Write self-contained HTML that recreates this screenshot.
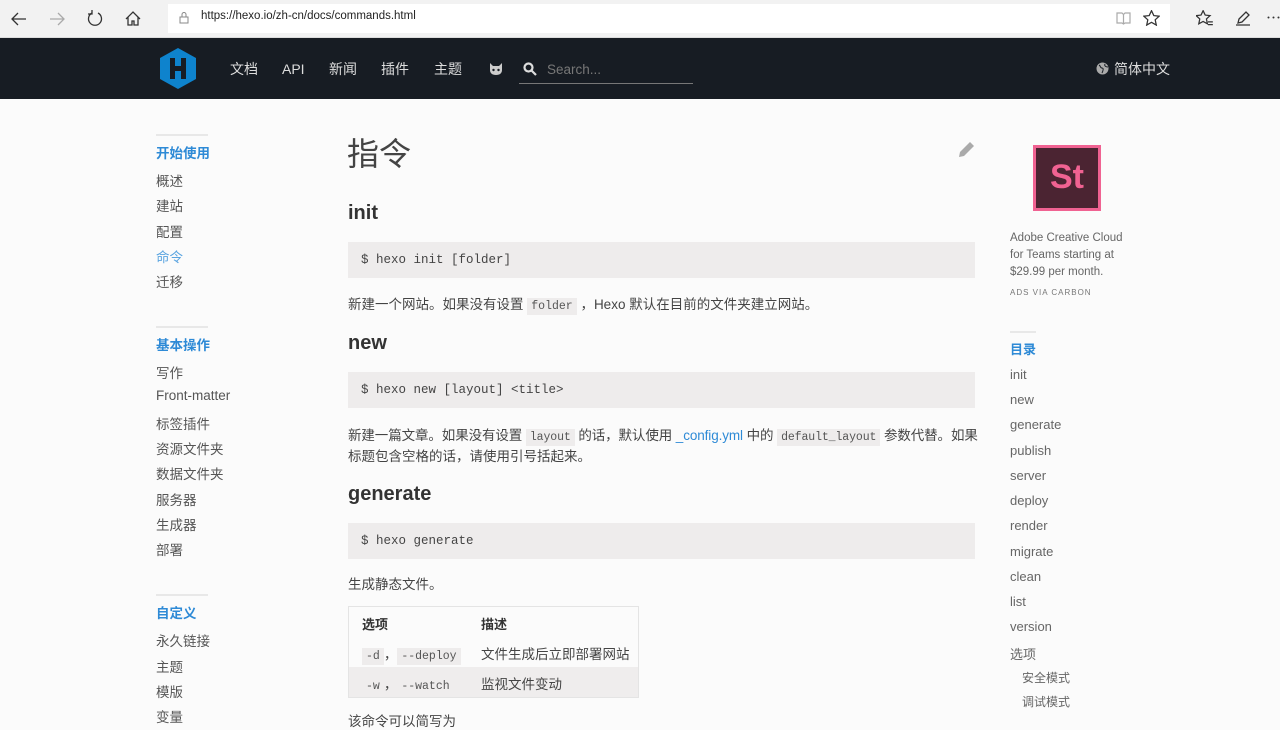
<!DOCTYPE html>
<html><head><meta charset="utf-8"><style>
*{margin:0;padding:0;box-sizing:border-box}
body{width:1280px;height:718px;overflow:hidden;background:#fbfbfb;font-family:"Liberation Sans","Noto Sans CJK SC",sans-serif;color:#555;position:relative}
.a{position:absolute;white-space:nowrap}
.chrome{position:absolute;left:0;top:0;width:1280px;height:38px;background:#f2f2f2;border-bottom:1px solid #ddd}
.addr{position:absolute;left:168px;top:4px;width:1002px;height:29px;background:#fff}
.nav{position:absolute;left:0;top:38px;width:1280px;height:61px;background:#171c23}
.nv{position:absolute;top:21px;height:20px;display:flex;align-items:center;color:#ddd;font-size:14px}
.sh{font-size:13.5px;font-weight:bold;color:#2e8ad6}
.si{font-size:13.5px;color:#555}
.bar{position:absolute;width:52px;height:2px;background:#e8e8e8}
.code{position:absolute;left:348px;width:627px;height:36px;background:#eeecec;font-family:"Liberation Mono",monospace;font-size:12.5px;color:#444;padding:11px 13px}
h2{position:absolute;left:348px;font-size:20px;color:#333;font-weight:bold}
.p{font-size:13.5px;color:#444}
code{font-family:"Liberation Mono",monospace;font-size:11.5px;background:#eeecec;padding:2px 4px;color:#555}
.toc{font-size:13px;color:#666;left:1010px}
a{color:#2e8ad6;text-decoration:none}
svg{display:block}
</style></head><body>
<div class="chrome"></div>
<div class="addr"></div>
<svg class="a" style="left:10px;top:11px" width="17" height="16" viewBox="0 0 17 16" fill="none" stroke="#333" stroke-width="1.3"><path d="M16 8H2M8 2L2 8l6 6"/></svg>
<svg class="a" style="left:49px;top:11px" width="17" height="16" viewBox="0 0 17 16" fill="none" stroke="#aaa" stroke-width="1.3"><path d="M1 8h14M9 2l6 6-6 6"/></svg>
<svg class="a" style="left:87px;top:10px" width="16" height="17" viewBox="0 0 16 17" fill="none" stroke="#333" stroke-width="1.3"><path d="M5 3A6.5 6.5 0 1 0 11 3"/><path d="M5 0v4H1"/></svg>
<svg class="a" style="left:125px;top:11px" width="16" height="15" viewBox="0 0 16 15" fill="none" stroke="#333" stroke-width="1.3"><path d="M1 8L8 1l7 7M3 6v8h4v-4h2v4h4V6"/></svg>
<svg class="a" style="left:179px;top:11px" width="10" height="13" viewBox="0 0 10 13" fill="none" stroke="#888" stroke-width="1"><rect x="1" y="6" width="8" height="6"/><path d="M3 6V3.5a2 2 0 0 1 4 0V6"/></svg>
<div class="a" style="left:201px;top:10px;font-size:11.5px;color:#222">https://hexo.io/zh-cn/docs/commands.html</div>
<svg class="a" style="left:1116px;top:11px" width="15" height="14" viewBox="0 0 15 14" fill="none" stroke="#aaa" stroke-width="1.2"><path d="M1 2h5l1.5 1.5L9 2h5v10H9l-1.5 1L6 12H1zM7.5 3.5v9"/></svg>
<svg class="a" style="left:1143px;top:10px" width="17" height="16" viewBox="0 0 24 23" fill="none" stroke="#333" stroke-width="1.8"><path d="M12 1l3.3 7 7.7.9-5.7 5.2 1.6 7.6L12 17.8 5.1 21.7l1.6-7.6L1 8.9l7.7-.9z"/></svg>
<svg class="a" style="left:1196px;top:10px" width="17" height="16" viewBox="0 0 24 23" fill="none" stroke="#333" stroke-width="1.8"><path d="M10 1l3 6.3 7 .8-5.2 4.8 1.4 6.9L10 16.4 3.8 19.8l1.4-6.9L0 8.1l7-.8zM17 17h7M17 21h7"/></svg>
<svg class="a" style="left:1235px;top:10px" width="16" height="16" viewBox="0 0 16 16" fill="none" stroke="#333" stroke-width="1.3"><path d="M3 13l1-4 7-7 3 3-7 7zM1 15h14"/></svg>
<div class="a" style="left:1266px;top:7px;font-size:15px;color:#333">⋯</div>
<div class="nav">
<svg class="a" style="left:160px;top:10px" width="36" height="41" viewBox="0 0 36 41"><polygon points="18,0 36,10 36,31 18,41 0,31 0,10" fill="#0e83cd"/><path d="M10 10h5v8h6v-8h5v21h-5v-8h-6v8h-5z" fill="#171c23"/></svg>
<div class="nv" style="left:230px">文档</div>
<div class="nv" style="left:282px">API</div>
<div class="nv" style="left:329px">新闻</div>
<div class="nv" style="left:381px">插件</div>
<div class="nv" style="left:434px">主题</div>
<svg class="a" style="left:489px;top:25px" width="14" height="12" viewBox="0 0 14 12"><path d="M1 0l3 3h6l3-3v7c0 3-2 5-6 5S1 10 1 7z" fill="#ccc"/><circle cx="4.5" cy="7" r="1.2" fill="#171c23"/><circle cx="9.5" cy="7" r="1.2" fill="#171c23"/></svg>
<svg class="a" style="left:523px;top:24px" width="14" height="14" viewBox="0 0 14 14" fill="none" stroke="#ddd" stroke-width="2.2"><circle cx="5.5" cy="5.5" r="4"/><path d="M8.5 8.5L13 13"/></svg>
<div class="nv" style="left:547px;color:#777;font-size:13.5px">Search...</div>
<div style="position:absolute;left:519px;top:45px;width:174px;height:1px;background:#777"></div>
<svg class="a" style="left:1096px;top:24px" width="13" height="13" viewBox="0 0 13 13"><circle cx="6.5" cy="6.5" r="6" fill="#aaa"/><path d="M3 3c2 1 1 3 3 3s1 3 0 5M9 2c-1 2 1 3 3 3" stroke="#171c23" fill="none"/></svg>
<div class="nv" style="left:1114px">简体中文</div>
</div>

<div class="bar" style="left:156px;top:134px"></div>
<div class="a sh" style="left:156px;top:142px">开始使用</div>
<div class="a si" style="left:156px;top:170px">概述</div>
<div class="a si" style="left:156px;top:195px">建站</div>
<div class="a si" style="left:156px;top:221px">配置</div>
<div class="a si" style="left:156px;top:246px;color:#5aa4e0">命令</div>
<div class="a si" style="left:156px;top:271px">迁移</div>
<div class="bar" style="left:156px;top:326px"></div>
<div class="a sh" style="left:156px;top:334px">基本操作</div>
<div class="a si" style="left:156px;top:362px">写作</div>
<div class="a si" style="left:156px;top:388px">Front-matter</div>
<div class="a si" style="left:156px;top:413px">标签插件</div>
<div class="a si" style="left:156px;top:438px">资源文件夹</div>
<div class="a si" style="left:156px;top:463px">数据文件夹</div>
<div class="a si" style="left:156px;top:489px">服务器</div>
<div class="a si" style="left:156px;top:514px">生成器</div>
<div class="a si" style="left:156px;top:539px">部署</div>
<div class="bar" style="left:156px;top:594px"></div>
<div class="a sh" style="left:156px;top:602px">自定义</div>
<div class="a si" style="left:156px;top:630px">永久链接</div>
<div class="a si" style="left:156px;top:656px">主题</div>
<div class="a si" style="left:156px;top:681px">模版</div>
<div class="a si" style="left:156px;top:706px">变量</div>

<div class="a" style="left:347px;top:129px;font-size:32px;color:#444">指令</div>
<svg class="a" style="left:957px;top:141px" width="18" height="18" viewBox="0 0 18 18"><path d="M2 16l1-5L13 1l4 4L7 15z" fill="#aaa"/></svg>
<h2 style="top:202px">init</h2>
<div class="code" style="top:242px">$ hexo init [folder]</div>
<div class="a p" style="left:348px;top:293px">新建一个网站。如果没有设置 <code>folder</code> ，Hexo 默认在目前的文件夹建立网站。</div>
<h2 style="top:332px">new</h2>
<div class="code" style="top:372px">$ hexo new [layout] &lt;title&gt;</div>
<div class="a p" style="left:348px;top:424px;letter-spacing:-0.1px">新建一篇文章。如果没有设置 <code>layout</code> 的话，默认使用 <a>_config.yml</a> 中的 <code>default_layout</code> 参数代替。如果</div>
<div class="a p" style="left:348px;top:445px">标题包含空格的话，请使用引号括起来。</div>
<h2 style="top:483px">generate</h2>
<div class="code" style="top:523px">$ hexo generate</div>
<div class="a p" style="left:348px;top:573px">生成静态文件。</div>
<div style="position:absolute;left:348px;top:606px;width:291px;height:92px;border:1px solid #e4e4e4;background:#fbfbfb"></div>
<div style="position:absolute;left:349px;top:667px;width:289px;height:30px;background:#efeded"></div>
<div class="a p" style="left:362px;top:614px;font-weight:bold;color:#333;font-size:13px">选项</div>
<div class="a p" style="left:481px;top:614px;font-weight:bold;color:#333;font-size:13px">描述</div>
<div class="a p" style="left:362px;top:643px"><code>-d</code>，<code>--deploy</code></div>
<div class="a p" style="left:481px;top:643px">文件生成后立即部署网站</div>
<div class="a p" style="left:362px;top:673px"><code style="background:none">-w</code>，<code style="background:none">--watch</code></div>
<div class="a p" style="left:481px;top:673px">监视文件变动</div>
<div class="a p" style="left:348px;top:710px">该命令可以简写为</div>

<div style="position:absolute;left:1033px;top:145px;width:68px;height:66px;background:#f06292;padding:3px"><div style="width:100%;height:100%;background:#4b2432;color:#f06292;font-size:34px;text-align:center;line-height:58px;font-weight:bold">St</div></div>
<div class="a" style="left:1010px;top:230px;font-size:11.5px;color:#666;line-height:17px;white-space:normal;width:118px">Adobe Creative Cloud for Teams starting at $29.99 per month.</div>
<div class="a" style="left:1010px;top:288px;font-size:8px;color:#777;letter-spacing:1px">ADS VIA CARBON</div>
<div class="bar" style="left:1010px;top:331px;width:26px"></div>
<div class="a sh" style="left:1010px;top:339px;font-size:13px">目录</div>
<div class="a toc" style="top:367px">init</div>
<div class="a toc" style="top:392px">new</div>
<div class="a toc" style="top:417px">generate</div>
<div class="a toc" style="top:443px">publish</div>
<div class="a toc" style="top:468px">server</div>
<div class="a toc" style="top:493px">deploy</div>
<div class="a toc" style="top:518px">render</div>
<div class="a toc" style="top:544px">migrate</div>
<div class="a toc" style="top:569px">clean</div>
<div class="a toc" style="top:594px">list</div>
<div class="a toc" style="top:619px">version</div>
<div class="a toc" style="top:644px">选项</div>
<div class="a toc" style="top:669px;left:1022px;font-size:12px">安全模式</div>
<div class="a toc" style="top:693px;left:1022px;font-size:12px">调试模式</div>
</body></html>
